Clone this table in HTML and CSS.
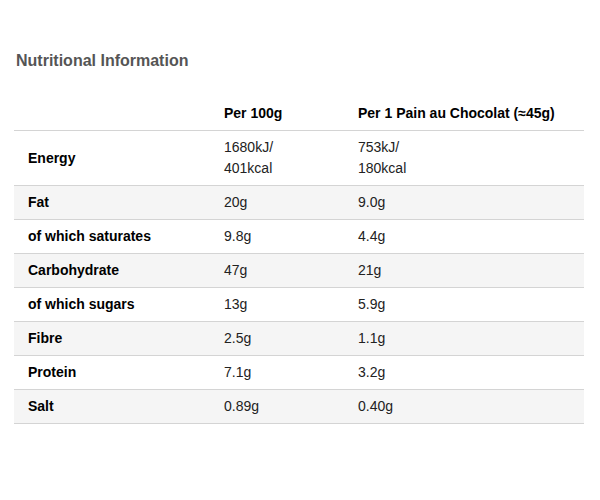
FILE: index.html
```html
<!DOCTYPE html>
<html>
<head>
<meta charset="utf-8">
<link rel="stylesheet" href="styles.css">
</head>
<body>
<div class="wrap">
  <h2 class="title">Nutritional Information</h2>
  <table class="nutri">
    <thead>
      <tr><th class="c1"></th><th class="c2">Per 100g</th><th class="c3">Per 1 Pain au Chocolat (≈45g)</th></tr>
    </thead>
    <tbody>
      <tr><th>Energy</th><td>1680kJ/<br>401kcal</td><td>753kJ/<br>180kcal</td></tr>
      <tr class="alt"><th>Fat</th><td>20g</td><td>9.0g</td></tr>
      <tr><th>of which saturates</th><td>9.8g</td><td>4.4g</td></tr>
      <tr class="alt"><th>Carbohydrate</th><td>47g</td><td>21g</td></tr>
      <tr><th>of which sugars</th><td>13g</td><td>5.9g</td></tr>
      <tr class="alt"><th>Fibre</th><td>2.5g</td><td>1.1g</td></tr>
      <tr><th>Protein</th><td>7.1g</td><td>3.2g</td></tr>
      <tr class="alt"><th>Salt</th><td>0.89g</td><td>0.40g</td></tr>
    </tbody>
  </table>
</div>
</body>
</html>
```
FILE: styles.css
```css
html, body { margin: 0; padding: 0; background: #fff; }
body { font-family: "Liberation Sans", Arial, sans-serif; color: #111; }
.wrap { padding: 51px 16px 0 14px; }
.title {
  margin: 0 0 0 2px;
  font-size: 16px;
  line-height: 20px;
  font-weight: bold;
  color: #555;
}
.nutri {
  margin-top: 26px;
  width: 570px;
  border-collapse: collapse;
  font-size: 14px;
  line-height: 21px;
  table-layout: fixed;
}
.nutri th, .nutri td {
  padding: 6px 0;
  text-align: left;
  vertical-align: middle;
  border-bottom: 1px solid #d4d4d4;
}
.nutri tbody th { padding-left: 14px; }
.nutri th { font-weight: bold; color: #000; }
.nutri td { font-weight: normal; color: #222; }
.nutri .c1 { width: 210px; }
.nutri .c2 { width: 134px; }
.nutri tr.alt { background: #f5f5f5; }
```
